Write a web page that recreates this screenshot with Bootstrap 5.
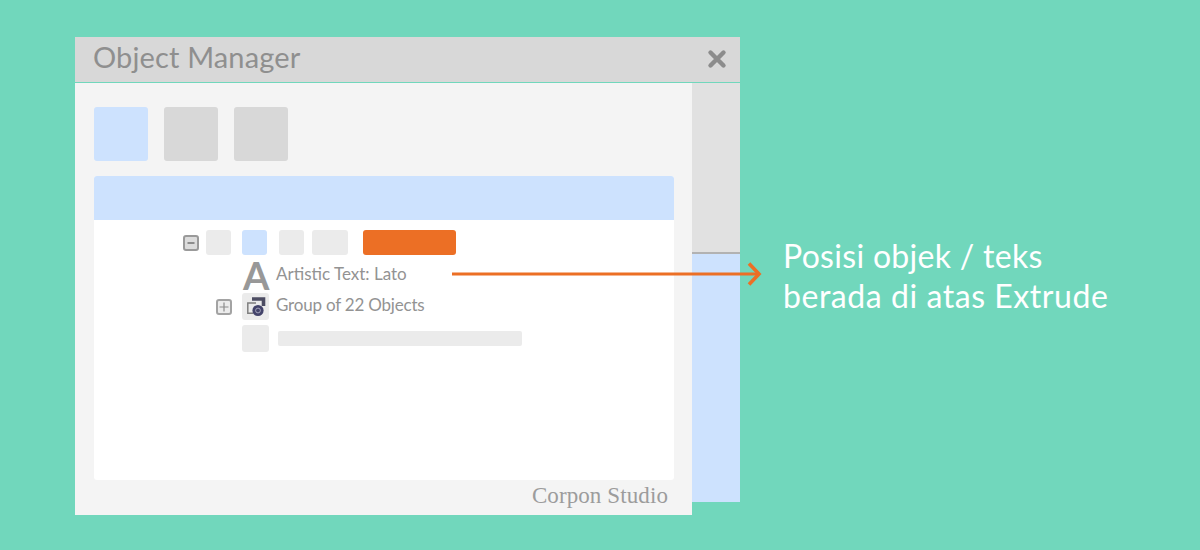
<!DOCTYPE html>
<html lang="id">
<head>
  <title>Object Manager</title>
  <meta charset="UTF-8">
  <meta name="viewport" content="width=device-width, initial-scale=1.0">
  <link rel="stylesheet" href="https://cdn.jsdelivr.net/npm/bootstrap@5.3.0/dist/css/bootstrap.min.css">
  <style>
    html, body { height: 100%; }
    body {
      background-color: #71d7bc;
      font-family: Lato, "Liberation Sans", sans-serif;
      overflow: hidden;
    }
    .slide { position: relative; width: 1200px; height: 550px; padding: 37px 0 0 75px; }
    .om-window { width: 665px; flex: none; }
    .om-title { height: 45px; background: #d8d8d8; padding: 0 13px 0 18px; color: #8f8f8f; font-size: 29px; line-height: 41px; letter-spacing: .15px; }
    .om-title span { display: block; margin-top: -6px; }
    .om-title svg { margin-top: -1px; }
    .om-panel { width: 617px; height: 432px; margin-top: 1px; background: #f4f4f4; padding: 24px 18px 0 19px; flex: none; }
    .om-side { width: 48px; height: 419px; margin-top: 1px; flex: none; }
    .side-top { height: 171px; background: #e1e1e1; border-bottom: 2px solid #b2b2b2; }
    .side-bottom { height: 248px; background: #cde2fe; }
    .tool-sq { width: 54px; height: 54px; border-radius: 3px; background: #d8d8d8; }
    .sq-blue { background: #cde2fe; }
    .om-list { height: 304px; margin-top: 15px; background: #fff; border-radius: 3px; overflow: hidden; }
    .om-list-head { height: 44px; background: #cde2fe; }
    .tree-row { display: flex; align-items: center; }
    .row-1 { height: 25px; margin-top: 10px; padding-left: 89px; }
    .row-2 { height: 28px; margin-top: 6px; padding-left: 149px; }
    .row-3 { height: 27px; margin-top: 4px; padding-left: 122px; }
    .row-4 { height: 27px; margin-top: 5px; padding-left: 148px; }
    .exp-box { width: 16px; height: 16px; flex: none; display: block; }
    .gr { height: 25px; background: #ebebeb; border-radius: 3px; flex: none; }
    .gr-a { width: 25px; margin-left: 7px; }
    .gr-b { width: 25px; margin-left: 11px; background: #cde2fe; }
    .gr-c { width: 25px; margin-left: 12px; }
    .gr-d { width: 36px; margin-left: 8px; }
    .gr-orange { width: 93px; margin-left: 15px; background: #ec6f25; }
    .big-a { width: 26px; flex: none; color: #989898; font-size: 38px; font-weight: 700; line-height: 28px; text-align: center; }
    .tree-label { color: #939393; font-size: 17px; margin-left: 7px; line-height: 1; white-space: nowrap; position: relative; top: -2px; }
    .label-tight { letter-spacing: -.2px; }
    .obj-icon { width: 27px; height: 27px; flex: none; background: #ebebeb; border-radius: 3px; margin-left: 10px; display: block; }
    .row-4 .obj-icon { margin-left: 0; }
    .ph-bar { width: 244px; height: 15px; background: #ebebeb; border-radius: 2px; margin-left: 9px; }
    .om-credit { color: #9c9c9c; font-family: "Liberation Serif", serif; font-size: 23px; line-height: 32px; text-align: right; padding-right: 6px; letter-spacing: .1px; }
    .callout { margin: 199px 0 0 43px; color: #fff; font-size: 32px; line-height: 40px; white-space: nowrap; letter-spacing: .3px; }
    .callout-wide { letter-spacing: .55px; }
    .pointer { position: absolute; left: 451px; top: 260px; width: 312px; height: 28px; }
  </style>
</head>
<body>
  <div class="slide d-flex align-items-start">
    <div class="om-window">
      <div class="om-title d-flex justify-content-between align-items-center">
        <span>Object Manager</span>
        <svg width="20" height="20" viewBox="0 0 20 20"><path d="M3.5 3.5 16.5 16.5M16.5 3.5 3.5 16.5" stroke="#8c8c8c" stroke-width="4.4" stroke-linecap="round"/></svg>
      </div>
      <div class="d-flex align-items-start">
        <div class="om-panel">
          <div class="d-flex" style="gap:16px">
            <div class="tool-sq sq-blue"></div>
            <div class="tool-sq"></div>
            <div class="tool-sq"></div>
          </div>
          <div class="om-list">
            <div class="om-list-head"></div>
            <div class="tree-row row-1">
              <svg class="exp-box" viewBox="0 0 16 16"><rect x="1" y="1" width="14" height="14" rx="2" fill="#dcdcdc" stroke="#9a9a9a" stroke-width="2"/><path d="M4.5 8h7" stroke="#8c8c8c" stroke-width="2"/></svg>
              <div class="gr gr-a"></div>
              <div class="gr gr-b"></div>
              <div class="gr gr-c"></div>
              <div class="gr gr-d"></div>
              <div class="gr gr-orange"></div>
            </div>
            <div class="tree-row row-2">
              <span class="big-a">A</span>
              <span class="tree-label">Artistic Text: Lato</span>
            </div>
            <div class="tree-row row-3">
              <svg class="exp-box" viewBox="0 0 16 16"><rect x="1" y="1" width="14" height="14" rx="2" fill="#ececec" stroke="#a3a3a3" stroke-width="2"/><path d="M3.5 8h9M8 3.5v9" stroke="#8c8c8c" stroke-width="1.2"/></svg>
              <svg class="obj-icon" viewBox="0 0 27 27">
                <path d="M10 6H21.5V13" fill="none" stroke="#4d4d63" stroke-width="3.6"/>
                <path d="M14 10H5.8V20.2H11" fill="none" stroke="#7f7f7f" stroke-width="1.5"/>
                <circle cx="16" cy="17.5" r="5.6" fill="#43436a"/>
                <circle cx="16" cy="17.5" r="2.4" fill="none" stroke="#b9b9cc" stroke-width=".8"/>
              </svg>
              <span class="tree-label label-tight">Group of 22 Objects</span>
            </div>
            <div class="tree-row row-4">
              <div class="obj-icon"></div>
              <div class="ph-bar"></div>
            </div>
          </div>
          <div class="om-credit">Corpon Studio</div>
        </div>
        <div class="om-side">
          <div class="side-top"></div>
          <div class="side-bottom"></div>
        </div>
      </div>
    </div>
    <div class="callout">
      <div>Posisi objek / teks</div>
      <div class="callout-wide">berada di atas Extrude</div>
    </div>
    <svg class="pointer" viewBox="0 0 312 28">
      <path d="M1 14H307" stroke="#ec6f25" stroke-width="3"/>
      <path d="M298 3.5 308 14 298 24.5" fill="none" stroke="#ec6f25" stroke-width="3.6"/>
    </svg>
  </div>
  <script src="https://cdn.jsdelivr.net/npm/bootstrap@5.3.0/dist/js/bootstrap.bundle.min.js"></script>
</body>
</html>
